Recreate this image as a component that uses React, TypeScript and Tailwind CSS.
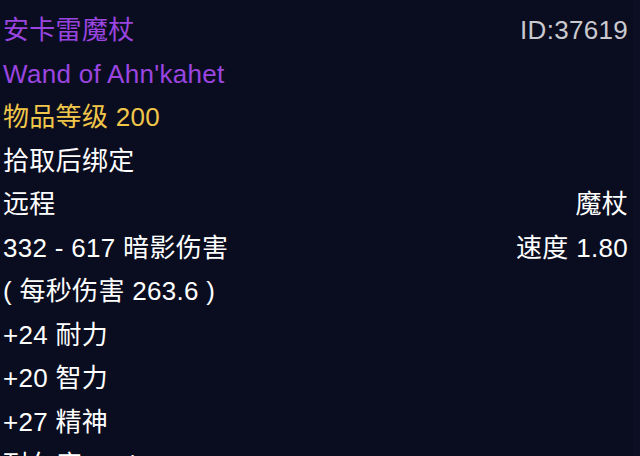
const rows: { left: string; right?: string; color: string; rightColor?: string }[] = [
  { left: "安卡雷魔杖", right: "ID:37619", color: "text-[#9a45e0]", rightColor: "text-[#c9c9cf]" },
  { left: "Wand of Ahn'kahet", color: "text-[#9a45e0]" },
  { left: "物品等级 200", color: "text-[#f0c64a]" },
  { left: "拾取后绑定", color: "text-white" },
  { left: "远程", right: "魔杖", color: "text-white" },
  { left: "332 - 617 暗影伤害", right: "速度 1.80", color: "text-white" },
  { left: "( 每秒伤害 263.6 )", color: "text-white" },
  { left: "+24 耐力", color: "text-white" },
  { left: "+20 智力", color: "text-white" },
  { left: "+27 精神", color: "text-white" },
  { left: "耐久度 75 / 75", color: "text-white" },
];

export default function App() {
  return (
    <div className="flex h-[456px] w-[640px] overflow-hidden bg-[#0a0d1f]">
      <div
        className="flex-1 pt-[9px] pl-[3px] pr-[5px] text-[26px] leading-[43.5px] tracking-[0.3px]"
        style={{ fontFamily: '"Liberation Sans", "Noto Sans CJK SC", sans-serif' }}
      >
        {rows.map((r) => (
          <div key={r.left} className="flex justify-between">
            <span className={r.color}>{r.left}</span>
            {r.right && <span className={r.rightColor ?? "text-white"}>{r.right}</span>}
          </div>
        ))}
      </div>
      <div className="w-[7px] bg-[#0d1024]" />
    </div>
  );
}
